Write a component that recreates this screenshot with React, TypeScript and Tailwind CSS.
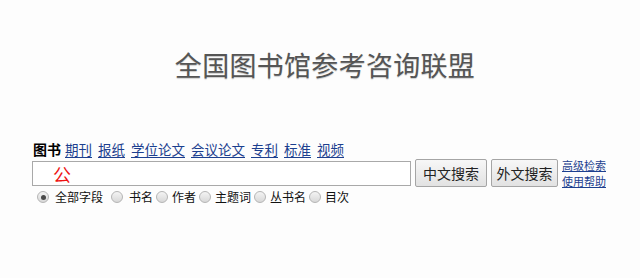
import React from "react";

const font = { fontFamily: '"Noto Sans CJK SC", "Noto Sans", sans-serif' };

function Radio({ checked }: { checked?: boolean }) {
  return (
    <span className="inline-flex items-center justify-center w-[12px] h-[12px] rounded-full border border-[#b5b5b5] bg-gradient-to-b from-[#f4f4f4] to-[#d8d8d8]">
      {checked && <span className="w-[5px] h-[5px] rounded-full bg-[#4a4a4a]" />}
    </span>
  );
}

export default function App() {
  const tabs = ["期刊", "报纸", "学位论文", "会议论文", "专利", "标准", "视频"];
  const radios = [
    { l: "全部字段", c: true, ml: "ml-[6px]", gap: "ml-[8px]" },
    { l: "书名", ml: "ml-[6px]", gap: "ml-[8px]" },
    { l: "作者", ml: "ml-[4px]", gap: "ml-[3px]" },
    { l: "主题词", ml: "ml-[4px]", gap: "ml-[3px]" },
    { l: "丛书名", ml: "ml-[4px]", gap: "ml-[3px]" },
    { l: "目次", ml: "ml-[4px]", gap: "ml-[3px]" },
  ];
  return (
    <div className="w-[640px] h-[278px] bg-[#fdfdfd] overflow-hidden" style={font}>
      <div className="pt-[48px] flex justify-center pl-[10px]">
        <div className="text-[27px] leading-[34px] text-[#555] tracking-[0.3px] [text-shadow:0_1px_1px_rgba(0,0,0,0.2)]">
          全国图书馆参考咨询联盟
        </div>
      </div>
      <div className="pl-[33px] mt-[58px]">
        <div className="flex items-center h-[18px] text-[13.5px] leading-[18px]">
          <span className="font-bold text-black text-[14px]">图书</span>
          {tabs.map((t, i) => (
            <a key={t} className={`${i === 0 ? "ml-[4px]" : "ml-[6px]"} text-[#1c3f8f] underline underline-offset-2 cursor-pointer`}>
              {t}
            </a>
          ))}
        </div>
        <div className="flex items-start mt-[1px] h-[29px]">
          <div className="mt-[2px] w-[379px] h-[25px] border border-[#a9a9a9] bg-white flex items-center pl-[20px] ml-[-1px]">
            <span className="text-[18px] leading-[20px] text-[#ee1111]">公</span>
          </div>
          <button className="ml-[4px] w-[72px] h-[28px] border border-[#a5a5a5] rounded-[2px] bg-gradient-to-b from-[#f7f7f7] to-[#e2e2e2] text-[14px] text-[#222]">
            中文搜索
          </button>
          <button className="ml-[4px] w-[67px] h-[28px] border border-[#a5a5a5] rounded-[2px] bg-gradient-to-b from-[#f7f7f7] to-[#e2e2e2] text-[14px] text-[#222]">
            外文搜索
          </button>
          <div className="ml-[4px] -mt-[2px] flex flex-col text-[11px] leading-[16px] text-[#1c3f8f]">
            <a className="underline cursor-pointer">高级检索</a>
            <a className="underline cursor-pointer">使用帮助</a>
          </div>
        </div>
        <div className="flex items-center h-[16px] mt-[1px] text-[12px] leading-[16px] text-[#111] pl-[4px]">
          {radios.map((r, i) => (
            <span key={r.l} className={`flex items-center ${i === 0 ? "" : r.gap}`}>
              <Radio checked={r.c} />
              <span className={r.ml}>{r.l}</span>
            </span>
          ))}
        </div>
      </div>
    </div>
  );
}
